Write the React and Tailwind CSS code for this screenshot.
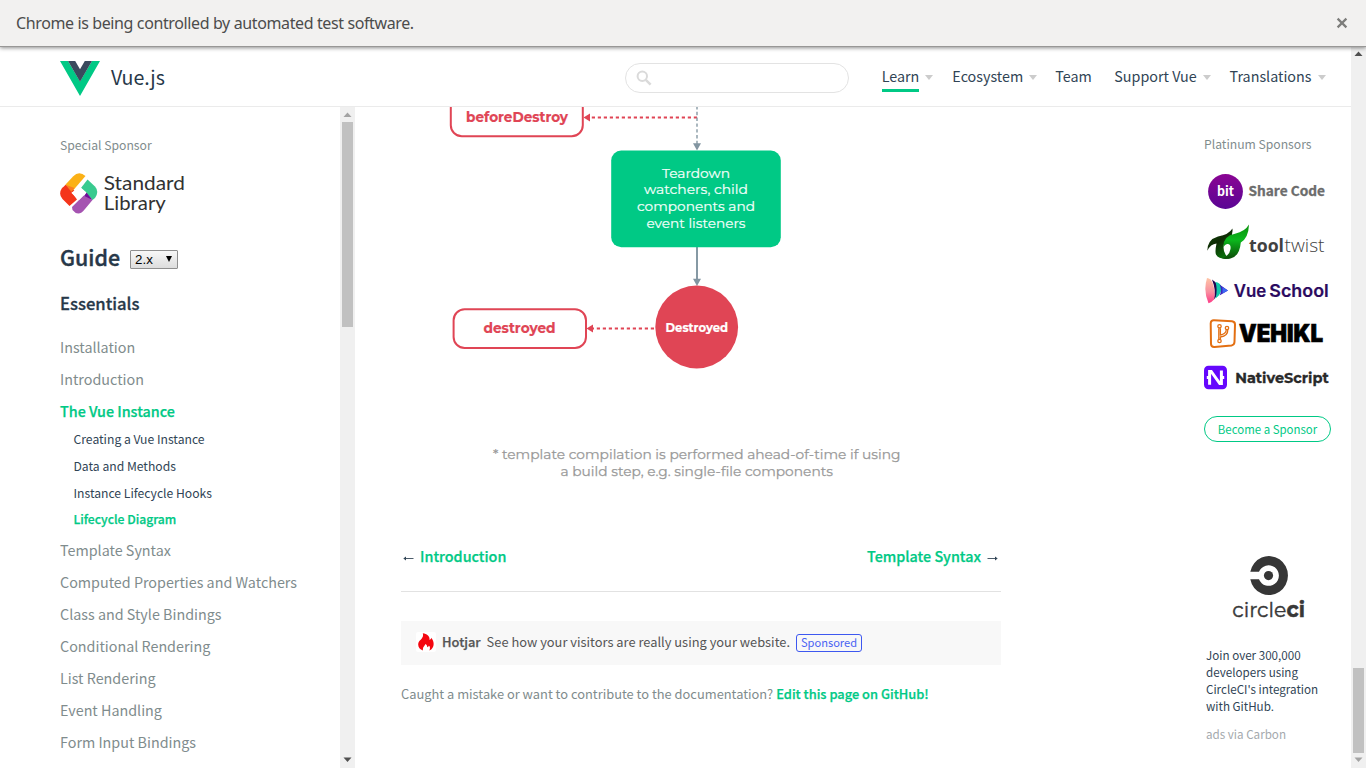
import React from "react";

const guideBefore = ["Installation", "Introduction"];
const subItems = ["Creating a Vue Instance", "Data and Methods", "Instance Lifecycle Hooks"];
const guideAfter = [
  "Template Syntax",
  "Computed Properties and Watchers",
  "Class and Style Bindings",
  "Conditional Rendering",
  "List Rendering",
  "Event Handling",
  "Form Input Bindings",
];

function InfoBar() {
  return (
    <div className="relative z-10 flex h-[47px] shrink-0 items-center justify-between border-b border-[#989796] bg-[#f2f1f0] pr-[18px] pl-4 shadow-[0_1px_4px_rgba(0,0,0,0.45)]">
      <span className="font-['Noto_Sans',sans-serif] text-[16px] tracking-[-0.38px] whitespace-nowrap text-[#4c4c4c]">
        Chrome is being controlled by automated test software.
      </span>
      <svg width="12" height="12" viewBox="0 0 12 12" className="shrink-0">
        <path d="M1.6 1.6 L10.4 10.4 M10.4 1.6 L1.6 10.4" stroke="#7d7d7b" strokeWidth="2.2" />
      </svg>
    </div>
  );
}

function Caret() {
  return (
    <svg width="8" height="5" viewBox="0 0 8 5" className="mt-[3px] ml-1.5 shrink-0">
      <path d="M0 0 H8 L4 5 Z" fill="#cccccc" />
    </svg>
  );
}

function Header() {
  return (
    <header className="flex h-[60px] shrink-0 items-center border-b border-[#ebebeb] pr-[25.5px] pl-[60px]">
      <svg width="40" height="35" viewBox="0 0 40 35" className="mt-[4px] shrink-0">
        <path d="M0 0 H8 L20 20.6 L32 0 H40 L20 35 Z" fill="#00c985" />
        <path d="M8 0 H15.2 L20 8.2 L24.8 0 H32 L20 20.8 Z" fill="#3a495d" />
      </svg>
      <span className="ml-[11px] text-[19.6px] leading-[30px] text-[#273849]">Vue.js</span>
      <div className="mt-[2px] mr-[33px] ml-auto flex h-[30px] w-[224px] items-center rounded-full border border-[#e3e3e3] pl-[10px]">
        <svg width="16" height="16" viewBox="0 0 16 16" className="mt-px">
          <circle cx="6.3" cy="6.3" r="4.7" fill="none" stroke="#dadada" strokeWidth="2" />
          <path d="M9.8 9.8 L14.6 14.6" stroke="#dadada" strokeWidth="2.5" />
        </svg>
      </div>
      <nav className="-mt-[2px] flex items-center text-[14.33px] leading-[22px] text-[#304455]">
        <div className="flex items-center">
          <span className="relative">
            Learn
            <span className="absolute right-0 bottom-[-5px] left-0 h-[3px] bg-[#00c985]" />
          </span>
          <Caret />
        </div>
        <div className="ml-[19px] flex items-center">Ecosystem<Caret /></div>
        <div className="ml-[18px]">Team</div>
        <div className="ml-[22.5px] flex items-center">Support Vue<Caret /></div>
        <div className="ml-[19px] flex items-center">Translations<Caret /></div>
      </nav>
    </header>
  );
}

function StandardLibraryLogo() {
  return (
    <svg width="136" height="46" viewBox="60 171 136 46" className="mt-[15px] block">
      <path d="M65.5 184.5 L73 176.5 Q79 170.5 85.5 176 L73 190.5 Z" fill="#fbb116" />
      <path d="M62 188 Q64 186.5 65.5 184.8 L77 192.3 L71.5 192 L77 199.5 L69.5 206 L62.5 199 Q58 194 62 188 Z" fill="#f4351b" />
      <path d="M65.5 184.8 L74.5 188 L71.5 192 Z" fill="#fb7d22" />
      <path d="M87.5 179.5 L95 186.5 Q99.5 191.5 95 198 L92.5 200 L81 188 Z" fill="#39ca8f" />
      <path d="M83 197.5 L86.5 192.5 L92.5 200 Z" fill="#6f0d99" />
      <path d="M83.5 195.5 L92.5 200 L85 209 Q78.5 217.5 72.5 210 L72 207 Z" fill="#a553b1" />
      <path d="M79 186 L86.5 192.5 L79 200 L71.5 193 Z" fill="#fff" />
      <g fill="#323232" fontFamily="Lato, sans-serif" fontSize="20">
        <text x="103.8" y="189.7" textLength="81" lengthAdjust="spacingAndGlyphs">Standard</text>
        <text x="103.8" y="209.8" textLength="62" lengthAdjust="spacingAndGlyphs">Library</text>
      </g>
    </svg>
  );
}

function Sidebar() {
  return (
    <aside className="flex w-[340px] shrink-0 flex-col overflow-hidden pt-[27px] pl-[60px]">
      <h3 className="text-[12.2px] leading-[22px] text-[#7f8c8d]">Special Sponsor</h3>
      <StandardLibraryLogo />
      <div className="mt-[22px] flex h-[36px] items-center">
        <h2 className="text-[21.4px] leading-[36px] font-medium text-[#273849] [-webkit-text-stroke:0.4px]">Guide</h2>
        <div className="mt-[4px] ml-[10px] flex h-[19px] w-[48px] items-center justify-between rounded-[1px] border border-[#8f8f8f] bg-linear-to-b from-[#f8f8f8] to-[#dddddd] pr-[5px] pl-[4px] font-['Liberation_Sans',sans-serif] text-[13.33px] leading-[17px] text-black">
          2.x
          <svg width="6" height="6" viewBox="0 0 6 6" className="-mt-[1px]"><path d="M0 0 H6 L3 6 Z" fill="#000" /></svg>
        </div>
      </div>
      <h3 className="mt-[16px] text-[16.6px] leading-[24px] font-medium text-[#273849] [-webkit-text-stroke:0.3px]">Essentials</h3>
      <ul className="mt-[16px] flex flex-col text-[14.33px] leading-8 whitespace-nowrap text-[#7f8c8d]">
        {guideBefore.map((t) => <li key={t}>{t}</li>)}
        <li className="font-medium text-[#00c985] [-webkit-text-stroke:0.25px]">The Vue Instance</li>
        <li>
          <ul className="-mt-px pb-[0.5px] pl-[13.5px] text-[12.17px] leading-[26.8px] text-[#304455]">
            {subItems.map((t) => <li key={t}>{t}</li>)}
            <li className="font-medium text-[#00c985] [-webkit-text-stroke:0.25px]">Lifecycle Diagram</li>
          </ul>
        </li>
        {guideAfter.map((t) => <li key={t}>{t}</li>)}
      </ul>
    </aside>
  );
}

function SidebarScrollbar() {
  return (
    <div className="flex w-[15px] shrink-0 flex-col items-center bg-[#f0f0f0]">
      <svg width="15" height="15" viewBox="0 0 15 15" className="shrink-0"><path d="M3.5 10 H11.5 L7.5 5.5 Z" fill="#a3a3a3" /></svg>
      <div className="h-[205px] w-[11px] bg-[#c1c1c1]" />
      <svg width="15" height="15" viewBox="0 0 15 15" className="mt-auto shrink-0"><path d="M3.5 4.5 H11.5 L7.5 9 Z" fill="#505050" /></svg>
    </div>
  );
}

function LifecycleDiagram() {
  return (
    <svg width="600" height="393" viewBox="401 107 600 393" className="block shrink-0" fontFamily="Montserrat, Inter, sans-serif">
      <g fill="none" stroke="#e04555" strokeWidth="2">
        <rect x="450.8" y="97" width="132" height="39.3" rx="11" />
        <rect x="453.6" y="309.3" width="132.4" height="38.7" rx="11" />
      </g>
      <g stroke="#e04555" strokeWidth="2" strokeDasharray="3.2 2.8">
        <path d="M697 117.5 H590" />
        <path d="M654 328.5 H592" />
      </g>
      <path d="M583.5 117.5 L590 113.5 V121.5 Z M586.5 328.5 L593 324.5 V332.5 Z" fill="#e04555" />
      <path d="M697 107 V144" stroke="#8699a4" strokeWidth="1.4" strokeDasharray="3.4 2.4" strokeDashoffset="1" />
      <path d="M697 247 V280" stroke="#8699a4" strokeWidth="2" />
      <path d="M693 143.3 H701 L697 150.5 Z M693 278.8 H701 L697 286 Z" fill="#8295a1" />
      <rect x="611.2" y="150.5" width="169.6" height="96.7" rx="10" fill="#00c985" />
      <circle cx="696.7" cy="327" r="41.4" fill="#e04555" />
      <g fill="#e04555" fontWeight="700" fontSize="13.6" stroke="#e04555" strokeWidth="0.2">
        <text x="466" y="121.8" textLength="102" lengthAdjust="spacingAndGlyphs">beforeDestroy</text>
        <text x="483.5" y="333" textLength="72" lengthAdjust="spacingAndGlyphs">destroyed</text>
      </g>
      <text x="665.5" y="332" textLength="62.5" lengthAdjust="spacingAndGlyphs" fill="#fff" stroke="#fff" strokeWidth="0.2" fontWeight="700" fontSize="12">Destroyed</text>
      <g fill="#f4fffb" fontSize="13.6" fontWeight="400" stroke="#f4fffb" strokeWidth="0.2">
        <text x="662" y="177.8" textLength="68" lengthAdjust="spacingAndGlyphs">Teardown</text>
        <text x="644" y="194.4" textLength="104" lengthAdjust="spacingAndGlyphs">watchers, child</text>
        <text x="637" y="211.3" textLength="118" lengthAdjust="spacingAndGlyphs">components and</text>
        <text x="646.5" y="228.2" textLength="99" lengthAdjust="spacingAndGlyphs">event listeners</text>
      </g>
      <g fill="#999999" fontSize="13.8" fontWeight="400" stroke="#999999" strokeWidth="0.25">
        <text x="493" y="459.2" textLength="407.5" lengthAdjust="spacingAndGlyphs">* template compilation is performed ahead-of-time if using</text>
        <text x="560.5" y="476.2" textLength="272.5" lengthAdjust="spacingAndGlyphs">a build step, e.g. single-file components</text>
      </g>
    </svg>
  );
}

function ArrowGlyph({ flip }) {
  return (
    <svg width="11" height="7" viewBox="0 0 11 7" className={flip ? "mt-[5px] ml-[6px] rotate-180" : "mt-[5px] mr-[6px]"}>
      <path d="M1 3.5 H10.5" stroke="#4c5c6b" strokeWidth="1" />
      <path d="M0.3 3.5 L3 1.6 V5.4 Z" fill="#304455" />
    </svg>
  );
}

function Main() {
  return (
    <main className="ml-[46px] flex w-[600px] shrink-0 flex-col">
      <LifecycleDiagram />
      <div className="mt-[44px] flex justify-between pr-[3px] pl-[2px] text-[14.35px] leading-[24px] font-medium text-[#00c985] [-webkit-text-stroke:0.25px]">
        <a className="flex items-center"><ArrowGlyph />Introduction</a>
        <a className="flex items-center">Template Syntax<ArrowGlyph flip /></a>
      </div>
      <div className="mt-[23px] h-px bg-[#e2e2e2]" />
      <div className="mt-[29px] flex h-[44px] items-center bg-[#f8f8f8] pb-[2px] pl-[15px] text-[12.87px] leading-[22px] whitespace-nowrap text-[#555555]">
        <span className="flex h-[20px] w-[20px] items-center justify-center rounded-[2px] bg-white">
          <svg width="16" height="18" viewBox="0 0 16 18">
            <path d="M4.8 0.3 C9.5 1 12.2 3.8 11.4 7 C12.6 6.6 13.2 5.7 13.3 4.8 C16.8 9 16.6 15.2 11.3 17.6 C12.3 15.6 12.2 13.3 10.8 12.7 C10.6 13.4 10.1 14 9.3 14.2 C9.2 12.5 8.3 11.4 7.4 11 C7.2 12.8 4.2 13.8 5 17.5 C1.8 16.5 0 14 0.2 11 C0.5 7 6.4 5.8 4.8 0.3 Z" fill="#f4060f" />
          </svg>
        </span>
        <span className="ml-[6px] font-medium [-webkit-text-stroke:0.25px]">Hotjar</span>
        <span className="ml-[6px]">See how your visitors are really using your website.</span>
        <span className="mt-[2px] ml-[6px] flex h-[18px] w-[66px] items-center justify-center rounded-[3px] border border-[#3e58f0] pb-px text-[11.1px] leading-[15px] text-[#4a63f3]">Sponsored</span>
      </div>
      <p className="mt-[18px] flex text-[12.86px] leading-[22px] whitespace-nowrap text-[#7f8c8d]">
        Caught a mistake or want to contribute to the documentation?
        <a className="ml-[3px] font-medium text-[#00c985] [-webkit-text-stroke:0.25px]">Edit this page on GitHub!</a>
      </p>
    </main>
  );
}

function SponsorLogos() {
  return (
    <svg width="127" height="224" viewBox="1204 170 127 224" className="mt-[15px] block">
      <defs>
        <linearGradient id="bit" x1="0" y1="0" x2="0" y2="1"><stop stopColor="#8a0593" /><stop offset="1" stopColor="#5a0594" /></linearGradient>
        <linearGradient id="leafDark" x1="0" y1="0" x2="0.7" y2="1"><stop stopColor="#0d4a08" /><stop offset="0.5" stopColor="#0f2a04" /><stop offset="1" stopColor="#087a0c" /></linearGradient>
        <linearGradient id="leaf" x1="0" y1="0" x2="0" y2="1"><stop stopColor="#0a8f0c" /><stop offset="0.45" stopColor="#0bb81d" /><stop offset="1" stopColor="#0c4a07" /></linearGradient>
        <linearGradient id="school" x1="0" y1="0" x2="0" y2="1"><stop stopColor="#ffc5a6" /><stop offset="0.55" stopColor="#f88fa0" /><stop offset="1" stopColor="#fd3a86" /></linearGradient>
      </defs>
      <circle cx="1225.5" cy="191.5" r="17.4" fill="url(#bit)" />
      <text x="1217" y="196.3" textLength="17" lengthAdjust="spacingAndGlyphs" fill="#fff" fontFamily="'Noto Sans CJK SC', sans-serif" fontWeight="700" fontSize="13">bit</text>
      <text x="1248.5" y="196.3" textLength="76.5" lengthAdjust="spacingAndGlyphs" fill="#6c6c6c" stroke="#6c6c6c" strokeWidth="0.3" fontFamily="'Noto Sans CJK SC', sans-serif" fontWeight="700" fontSize="13.2">Share Code</text>

      <path d="M1207.3 250.8 Q1207.5 239.5 1218 236.5 Q1229 234.5 1232.4 228.5 Q1233.2 234 1230 238 L1224 244 Q1222.6 250 1225.5 254.5 Q1227 257.5 1230 258.6 Q1219 260 1216 254.5 Q1214.8 251.5 1216.5 243.5 Q1210.5 244 1207.3 250.8 Z" fill="url(#leafDark)" />
      <path d="M1249 224.5 Q1248.5 238 1240.8 242.5 Q1239.5 256.5 1230.5 258.4 Q1226 259.3 1222 258.2 Q1229.5 256 1230.5 249 Q1231.2 243.5 1227 244 Q1224.8 244.5 1223.5 247 Q1223 236 1235 233.7 Q1245 231.5 1249 224.5 Z" fill="url(#leaf)" />
      <g fill="#414141" fontFamily="'Open Sans', sans-serif" fontSize="18.5">
        <text x="1249" y="251.8" fontWeight="700" textLength="35" lengthAdjust="spacingAndGlyphs">tool</text>
        <text x="1284.5" y="251.8" fontWeight="300" textLength="40" lengthAdjust="spacingAndGlyphs">twist</text>
      </g>

      <path d="M1207 278 Q1211 278 1213 284 Q1216 293 1214 299.5 Q1211.5 302.5 1208.5 303.2 Q1203 291 1207 278 Z" fill="url(#school)" />
      <path d="M1212 279.5 Q1219.5 284 1218 292 Q1217 297 1214 299.5 Q1216.5 291 1212 279.5 Z" fill="#240050" />
      <path d="M1215.5 282 Q1220 282.5 1221.5 287 Q1222 294 1215.5 298.5 Q1217.8 290 1215.5 282 Z" fill="#10c8aa" />
      <path d="M1219.5 284.5 L1228 290.5 L1219.5 295.5 Q1222.5 290 1219.5 284.5 Z" fill="#3a24bd" />
      <path d="M1222.5 287 L1228 290.5 L1222.5 293.5 Z" fill="#3c66f5" />
      <g fill="#2b0a5f" stroke="#2b0a5f" strokeWidth="0.2" fontFamily="Inter, sans-serif" fontWeight="600" fontSize="17.6">
        <text x="1233.7" y="297" textLength="32.5" lengthAdjust="spacingAndGlyphs">Vue</text>
        <text x="1269.3" y="297" textLength="59.4" lengthAdjust="spacingAndGlyphs">School</text>
      </g>

      <path d="M1214 320.2 L1232 321.2 Q1235 321.5 1235 324.5 L1234.5 342 Q1234.3 345 1231.5 345.4 L1214.5 347 Q1211.2 347.2 1211 344 L1210.7 323.5 Q1210.8 320 1214 320.2 Z" fill="none" stroke="#e36f12" strokeWidth="2" />
      <g fill="none" stroke="#e36f12" strokeWidth="1.3">
        <circle cx="1219.5" cy="326.3" r="1.7" /><circle cx="1227" cy="328" r="1.7" /><circle cx="1219.5" cy="341" r="1.7" />
        <path d="M1218.8 328.2 V339.2 M1220.4 328.2 V335 Q1226 334 1226.3 329.8 M1220.4 339.2 V337 Q1228 336 1227.8 329.8" />
      </g>
      <text x="1239" y="342.1" textLength="84" lengthAdjust="spacingAndGlyphs" fill="#000" stroke="#000" strokeWidth="0.7" fontFamily="Inter, sans-serif" fontWeight="900" fontSize="24">VEHIKL</text>

      <rect x="1204" y="365.8" width="23" height="23.4" rx="4.5" fill="#6507fd" />
      <path d="M1209.6 384.8 V371.5 H1211.2 L1219.8 383.5 H1221.4 V370.4 M1206.8 377.6 H1209 M1222 377.6 H1224.2" fill="none" stroke="#fff" strokeWidth="3" />
      <text x="1235.2" y="382.9" textLength="93.5" lengthAdjust="spacingAndGlyphs" fill="#292929" stroke="#292929" strokeWidth="0.3" fontFamily="Montserrat, Inter, sans-serif" fontWeight="700" fontSize="14">NativeScript</text>
    </svg>
  );
}

function CircleCiLogo() {
  return (
    <svg width="80" height="70" viewBox="1229 554 80 70" className="mt-[112px] ml-[25px] block">
      <path d="M1250.3 571.8 A19 19.5 0 1 1 1250.3 579.3 H1259 A10.3 10.3 0 1 0 1259 571.8 Z" fill="#363636" />
      <circle cx="1268.5" cy="575.6" r="4.6" fill="#363636" />
      <g fill="#383838" stroke="#383838" strokeWidth="0.4" fontFamily="Montserrat, Lato, sans-serif" fontSize="21">
        <text x="1232.3" y="617" textLength="54" lengthAdjust="spacingAndGlyphs">circle</text>
        <text x="1286.5" y="617" textLength="18.5" lengthAdjust="spacingAndGlyphs" fontWeight="700">ci</text>
      </g>
    </svg>
  );
}

function RightColumn() {
  return (
    <aside className="mr-[20px] ml-auto w-[127px] shrink-0 pt-[26px]">
      <h3 className="text-[12.17px] leading-[22px] text-[#7f8c8d]">Platinum Sponsors</h3>
      <SponsorLogos />
      <a className="mt-[22px] flex h-[26px] items-center justify-center rounded-full border border-[#00c985] text-[11.45px] leading-[22px] text-[#00c985]">Become a Sponsor</a>
      <CircleCiLogo />
      <p className="mt-[22px] pl-[2px] text-[11.64px] leading-[17px] whitespace-nowrap text-[#304455]">
        Join over 300,000<br />developers using<br />CircleCI's integration<br />with GitHub.
      </p>
      <p className="mt-[11px] pl-[2px] text-[11.64px] leading-[17px] text-[#a4a9ad]">ads via Carbon</p>
    </aside>
  );
}

function PageScrollbar() {
  return (
    <div className="flex w-[15px] shrink-0 flex-col items-center bg-[#f0f0f0]">
      <svg width="15" height="15" viewBox="0 0 15 15" className="shrink-0"><path d="M3.5 9 H11.5 L7.5 4.5 Z" fill="#505050" /></svg>
      <div className="mt-auto h-[85px] w-[11px] bg-[#c1c1c1]" />
      <svg width="15" height="15" viewBox="0 0 15 15" className="shrink-0"><path d="M3.5 4.5 H11.5 L7.5 9 Z" fill="#a3a3a3" /></svg>
    </div>
  );
}

export default function App() {
  return (
    <div className="flex h-[768px] w-[1366px] flex-col overflow-hidden bg-white font-['Noto_Sans_CJK_SC',sans-serif]">
      <InfoBar />
      <div className="flex min-h-0 flex-1">
        <div className="flex min-w-0 flex-1 flex-col">
          <Header />
          <div className="flex min-h-0 flex-1">
            <Sidebar />
            <SidebarScrollbar />
            <Main />
            <RightColumn />
          </div>
        </div>
        <PageScrollbar />
      </div>
    </div>
  );
}
